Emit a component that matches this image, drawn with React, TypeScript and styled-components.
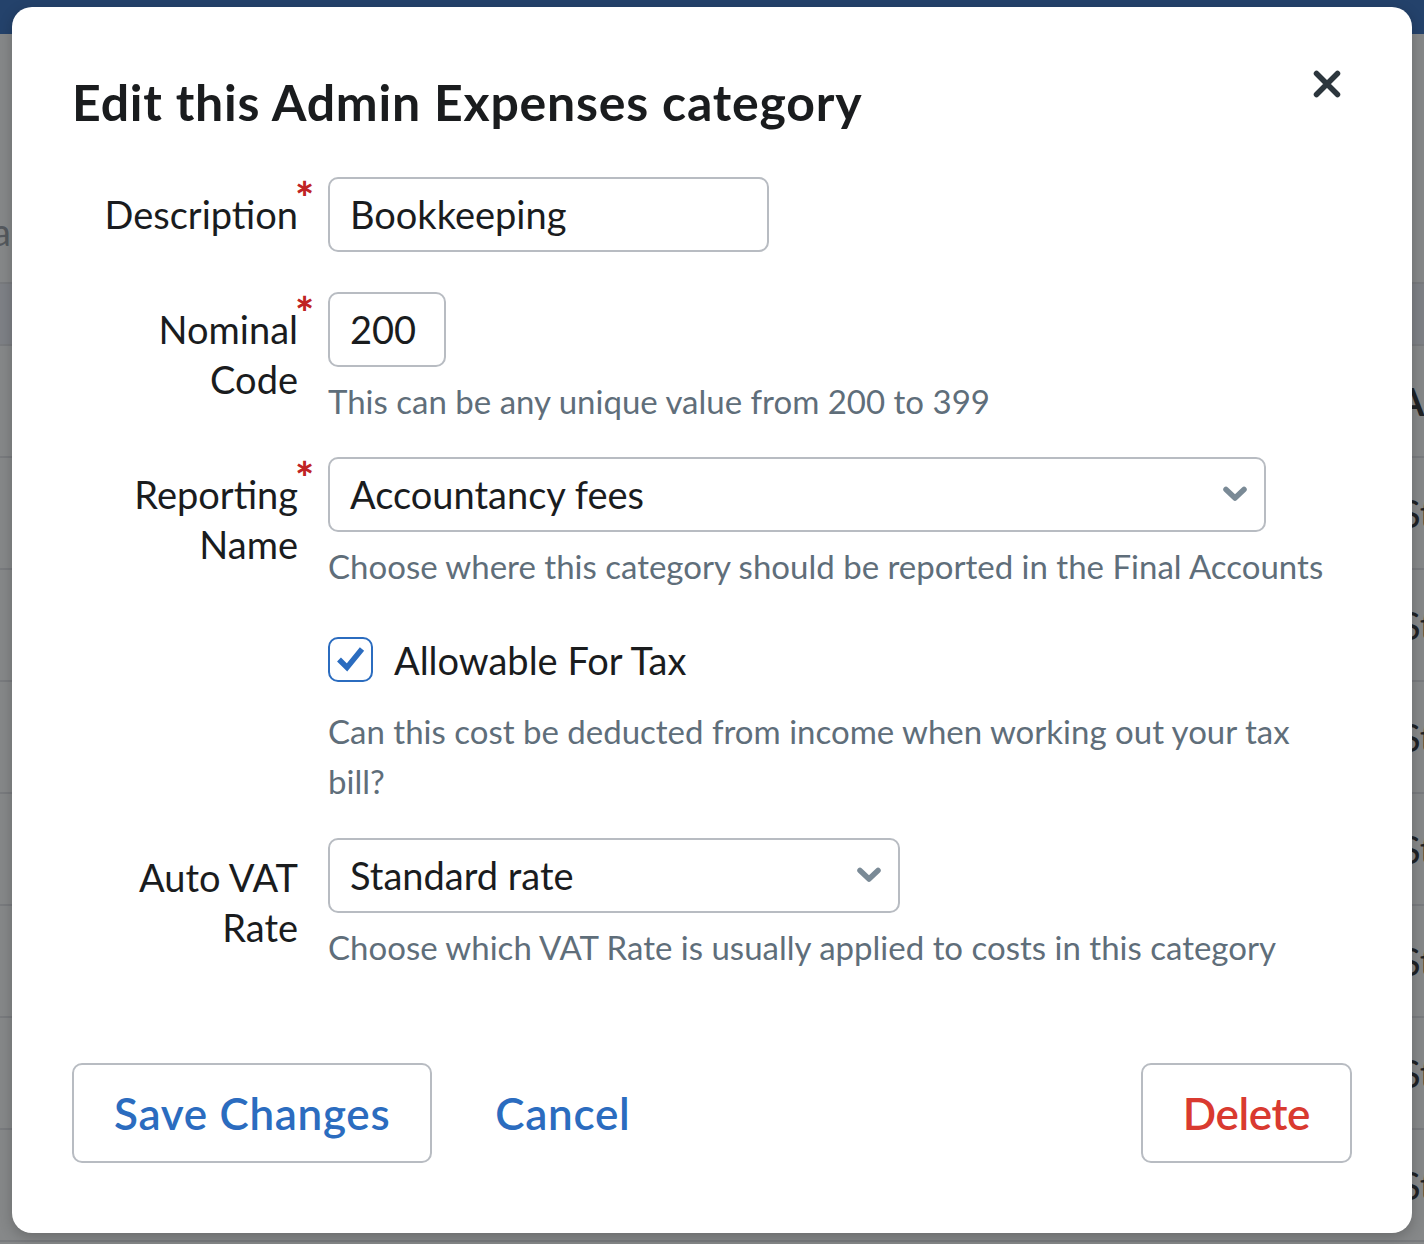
import React from "react";
import styled, { createGlobalStyle } from "styled-components";

const GlobalStyle = createGlobalStyle`
  html, body {
    margin: 0;
    padding: 0;
    height: 1244px;
    overflow: hidden;
    background: #868889;
    font-family: "Lato", "Liberation Sans", sans-serif;
  }
`;

const Page = styled.div`
  position: relative;
  width: 1424px;
  height: 1244px;
  overflow: hidden;
  background: #868889;
`;

const TopBar = styled.header`
  height: 34px;
  background: #24426b;
`;

const BackdropHeading = styled.div`
  height: 250px;
  box-sizing: border-box;
  padding-top: 175px;
  font-size: 38px;
  line-height: 44px;
  color: #55595e;
  text-indent: -8px;
  border-bottom: 2px solid #797b7e;
`;

const BackdropRow = styled.div<{ $height: number; $tint?: boolean; $bold?: boolean }>`
  height: ${(p) => p.$height}px;
  box-sizing: border-box;
  display: flex;
  align-items: center;
  padding-left: ${(p) => (p.$bold ? 1398 : 1400)}px;
  border-bottom: 2px solid #797b7e;
  background: ${(p) => (p.$tint ? "#7e8186" : "transparent")};
  font-size: 38px;
  font-weight: ${(p) => (p.$bold ? 700 : 400)};
  color: #1f2225;
  white-space: nowrap;
  overflow: hidden;
`;

const Modal = styled.form`
  position: absolute;
  top: 7px;
  left: 12px;
  width: 1400px;
  height: 1226px;
  box-sizing: border-box;
  padding: 64px 60px 70px;
  background: #fff;
  border-radius: 20px;
  box-shadow: 0 4px 14px rgba(0, 0, 0, 0.22);
  display: flex;
  flex-direction: column;
`;

const ModalHeader = styled.div`
  display: flex;
  justify-content: space-between;
  align-items: flex-start;
  height: 106px;
`;

const Title = styled.h2`
  margin: -1px 0 0;
  font-size: 50px;
  line-height: 64px;
  font-weight: 700;
  letter-spacing: 0.8px;
  color: #1a1c1e;
`;

const CloseButton = styled.button`
  display: flex;
  padding: 0;
  margin: -2px 10px 0 0;
  border: 0;
  background: none;
  color: #2c363d;
`;

const Fields = styled.div`
  display: flex;
  flex-direction: column;
  flex: 1;
`;

const FieldRow = styled.div<{ $height: number }>`
  display: grid;
  grid-template-columns: 226px 1fr;
  column-gap: 30px;
  height: ${(p) => p.$height}px;
`;

const Label = styled.label<{ $required?: boolean; $offset?: number }>`
  position: relative;
  justify-self: end;
  text-align: right;
  font-size: 38px;
  line-height: 50px;
  padding-top: ${(p) => p.$offset ?? 12}px;
  color: #1a1c1e;
  &::after {
    content: ${(p) => (p.$required ? '"*"' : "none")};
    position: absolute;
    top: -5px;
    right: -16px;
    font-size: 44px;
    font-weight: 900;
    color: #c02424;
  }
`;

const FieldBody = styled.div`
  display: flex;
  flex-direction: column;
  align-items: flex-start;
`;

const Control = styled.div<{ $width: number }>`
  position: relative;
  box-sizing: border-box;
  width: ${(p) => p.$width}px;
  height: 75px;
  padding: 0 0 2px 20px;
  border: 2px solid #b8bcc2;
  border-radius: 10px;
  display: flex;
  align-items: center;
  font-size: 38px;
  color: #1a1c1e;
`;

const Chevron = styled.svg`
  position: absolute;
  right: 17px;
  top: 27px;
`;

const Hint = styled.p<{ $gap?: number }>`
  margin: ${(p) => p.$gap ?? 9}px 0 0;
  font-size: 33px;
  line-height: 50px;
  color: #5f6e7a;
`;

const CheckRow = styled.div`
  display: flex;
  align-items: center;
  gap: 21px;
  height: 50px;
  font-size: 38px;
  color: #1a1c1e;
`;

const CheckBox = styled.span`
  box-sizing: border-box;
  width: 45px;
  height: 45px;
  margin-top: -2px;
  border: 2px solid #2b6cbf;
  border-radius: 10px;
  display: flex;
  align-items: center;
  justify-content: center;
`;

const Actions = styled.div`
  display: flex;
  align-items: center;
`;

const Button = styled.button<{ $danger?: boolean }>`
  box-sizing: border-box;
  height: 100px;
  padding: 0 40px;
  background: #fff;
  border: 2px solid #b8bcc2;
  border-radius: 10px;
  font-family: inherit;
  font-size: 44px;
  font-weight: 600;
  letter-spacing: ${(p) => (p.$danger ? -0.4 : 0.7)}px;
  color: ${(p) => (p.$danger ? "#d93a30" : "#2b6cbf")};
`;

const LinkButton = styled(Button)`
  border-color: transparent;
  margin-left: 21px;
`;

const Spacer = styled.div`
  flex: 1;
`;

const SelectChevron = () => (
  <Chevron width="24" height="16" viewBox="0 0 24 16" fill="none">
    <path d="M3 3.5l9 8.5 9-8.5" stroke="#7a8a96" strokeWidth="5.5" strokeLinecap="round" strokeLinejoin="round" />
  </Chevron>
);

function App() {
  return (
    <Page>
      <GlobalStyle />
      <TopBar />
      <BackdropHeading>a</BackdropHeading>
      <BackdropRow $height={62} $tint />
      <BackdropRow $height={112} $bold>Amount</BackdropRow>
      {Array.from({ length: 7 }, (_, i) => (
        <BackdropRow key={i} $height={112}>Standard</BackdropRow>
      ))}
      <BackdropRow $height={112} />
      <Modal>
        <ModalHeader>
          <Title>Edit this Admin Expenses category</Title>
          <CloseButton type="button" aria-label="Close">
            <svg width="30" height="30" viewBox="0 0 30 30" fill="none">
              <path d="M4.5 4.5l21 21M25.5 4.5l-21 21" stroke="currentColor" strokeWidth="5.5" strokeLinecap="round" />
            </svg>
          </CloseButton>
        </ModalHeader>
        <Fields>
          <FieldRow $height={115}>
            <Label $required>Description</Label>
            <FieldBody>
              <Control $width={441}>Bookkeeping</Control>
            </FieldBody>
          </FieldRow>
          <FieldRow $height={165}>
            <Label $required>Nominal Code</Label>
            <FieldBody>
              <Control $width={118}>200</Control>
              <Hint>This can be any unique value from 200 to 399</Hint>
            </FieldBody>
          </FieldRow>
          <FieldRow $height={178}>
            <Label $required>Reporting Name</Label>
            <FieldBody>
              <Control $width={938}>
                Accountancy fees
                <SelectChevron />
              </Control>
              <Hint>Choose where this category should be reported in the Final Accounts</Hint>
            </FieldBody>
          </FieldRow>
          <FieldRow $height={203}>
            <span />
            <FieldBody>
              <CheckRow>
                <CheckBox>
                  <svg width="30" height="28" viewBox="0 0 30 28" fill="none">
                    <path d="M3 14.5l8 8L26 4" stroke="#2b6cbf" strokeWidth="5.5" />
                  </svg>
                </CheckBox>
                Allowable For Tax
              </CheckRow>
              <Hint $gap={21}>Can this cost be deducted from income when working out your tax bill?</Hint>
            </FieldBody>
          </FieldRow>
          <FieldRow $height={200}>
            <Label $offset={14}>Auto VAT Rate</Label>
            <FieldBody>
              <Control $width={572}>
                Standard rate
                <SelectChevron />
              </Control>
              <Hint>Choose which VAT Rate is usually applied to costs in this category</Hint>
            </FieldBody>
          </FieldRow>
        </Fields>
        <Actions>
          <Button type="button">Save Changes</Button>
          <LinkButton type="button">Cancel</LinkButton>
          <Spacer />
          <Button type="button" $danger>Delete</Button>
        </Actions>
      </Modal>
    </Page>
  );
}

export default App;
